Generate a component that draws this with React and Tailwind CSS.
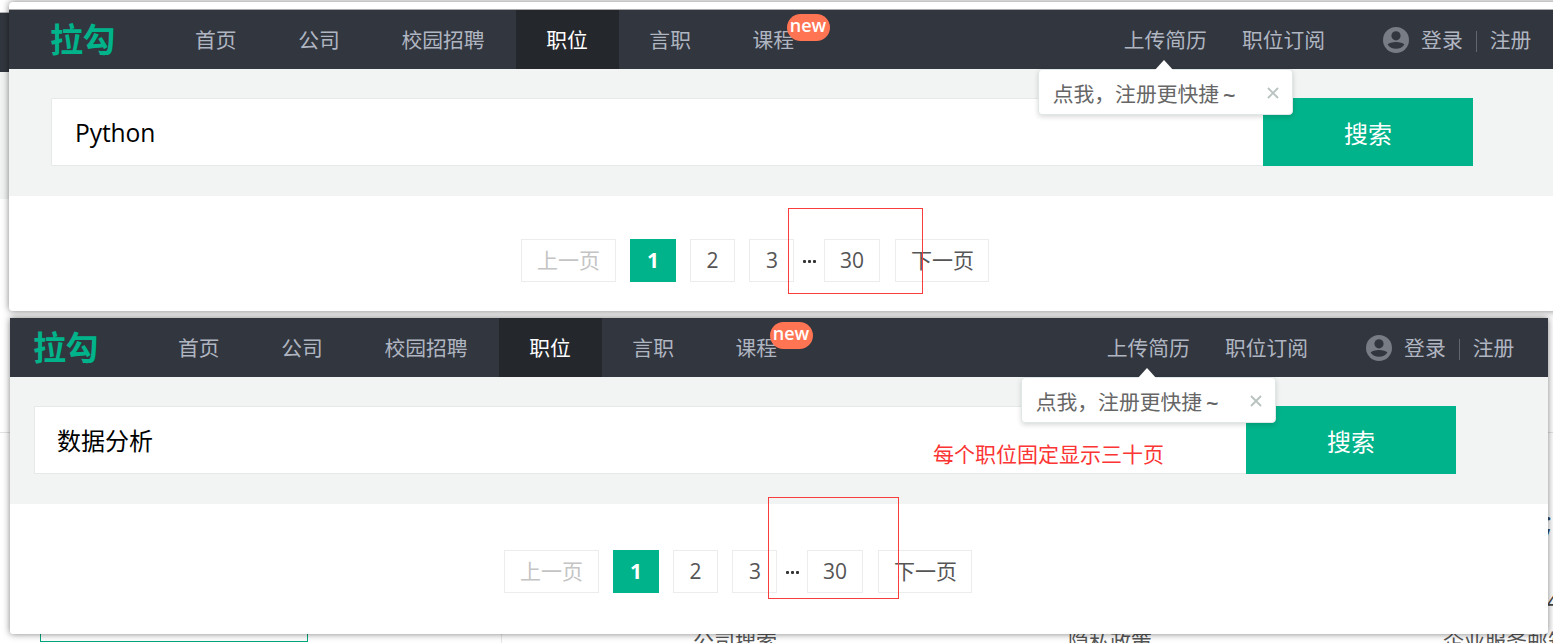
const navItems = ['首页', '公司', '校园招聘', '职位', '言职', '课程']

const Avatar = () => (
  <svg viewBox="0 0 26 26" className="mr-[12px] h-[26px] w-[26px] shrink-0">
    <circle cx="13" cy="13" r="13" fill="#787c85" />
    <circle cx="13" cy="8.8" r="4.6" fill="#32363e" />
    <path d="M4.6 17.6C6.8 14.2 19.2 14.2 21.4 17.6C18.4 23.2 7.6 23.2 4.6 17.6Z" fill="#32363e" />
  </svg>
)

const Tooltip = () => (
  <div className="absolute top-[59px] left-[-86px] z-10 flex h-[46px] w-[255px] items-center rounded-[4px] border border-[#e0e8e7] bg-white pt-[4px] pl-[14px] text-[#666] shadow-[0_2px_5px_rgba(0,0,0,0.15)]">
    <svg viewBox="0 0 20 11" className="absolute top-[-10px] left-[115px] h-[11px] w-[20px]">
      <path d="M0 11L10 0L20 11Z" fill="#fff" />
    </svg>
    <span>点我，注册更快捷</span>
    <span className="ml-[4px] font-['Open_Sans'] text-[22px] font-semibold">~</span>
    <svg viewBox="0 0 12 12" className="absolute top-[17px] left-[228px] h-[12px] w-[12px]">
      <path d="M1 1L11 11M11 1L1 11" stroke="#b9c3c1" strokeWidth="1.9" />
    </svg>
  </div>
)

const Navbar = ({ indent }) => (
  <header className={`flex h-[59px] items-center bg-[#32363e] text-[20.8px] text-[#afb5c1] ${indent}`}>
    <h1 className="-ml-px w-[115px] text-[33px] leading-[59px] font-bold tracking-[-0.5px] text-[#00b38a]">拉勾</h1>
    <nav className="flex h-full">
      {navItems.map((item) => (
        <a
          key={item}
          className={
            item === '职位'
              ? 'bg-[#24272c] pr-[31.6px] pl-[30px] leading-[60px] text-white'
              : 'relative pr-[31.6px] pl-[30px] leading-[60px]'
          }
        >
          {item}
          {item === '课程' && (
            <span className="absolute top-[4px] left-[64px] h-[27px] w-[43px] rounded-full bg-[#ff7452] text-center font-['Open_Sans'] text-[18px] leading-[23px] font-semibold text-white">
              new
            </span>
          )}
        </a>
      ))}
    </nav>
    <div className="ml-[298px] flex h-full items-center leading-[60px]">
      <div className="relative mr-[35px]">
        上传简历
        <Tooltip />
      </div>
      <span className="mr-[58px]">职位订阅</span>
      <Avatar />
      <span>登录</span>
      <i className="mr-[13px] ml-[13px] mt-[3px] h-[21px] w-px bg-[#62666d]" />
      <span>注册</span>
    </div>
  </header>
)

const SearchBar = ({ indent, keyword, note }) => (
  <section className={`flex h-[127px] items-start bg-[#f2f4f4] pt-[29px] ${indent}`}>
    <div className="relative flex h-[68px] w-[1212px] items-center border border-r-0 border-[#e6e9e9] bg-white pt-[2px] pl-[22px] text-[24px] text-black">
      {keyword}
      {note && (
        <p className="absolute top-[31px] left-[898px] text-[21px] leading-[32px] text-[#fb3434]">{note}</p>
      )}
    </div>
    <button className="h-[68px] w-[210px] bg-[#00b38a] pt-[3px] text-[24px] text-white">搜索</button>
  </section>
)

const cell = 'flex h-[43px] items-center justify-center border border-[#ececec]'

const Pager = ({ indent }) => (
  <div className={`flex text-[21px] text-[#555] ${indent}`}>
    <span className={`${cell} w-[95px] text-[#c4c4c4]`}>上一页</span>
    <span className="ml-[14px] flex h-[43px] w-[46px] items-center justify-center bg-[#00b38a] font-bold text-white">1</span>
    <span className={`${cell} ml-[14px] w-[45px]`}>2</span>
    <span className={`${cell} ml-[14px] w-[45px] pl-px`}>3</span>
    <span className="flex w-[30px] items-center justify-center gap-[2px] pt-[2px]">
      <i className="h-[3px] w-[3px] rounded-[1px] bg-[#333]" />
      <i className="h-[3px] w-[3px] rounded-[1px] bg-[#333]" />
      <i className="h-[3px] w-[3px] rounded-[1px] bg-[#333]" />
    </span>
    <span className={`${cell} w-[56px]`}>30</span>
    <span className={`${cell} ml-[15px] w-[94px] pl-px`}>下一页</span>
  </div>
)

// page that stays partly visible behind the two windows
const Backdrop = () => (
  <div className="absolute inset-0 flex flex-col bg-white text-[#555]">
    <div className="h-[13px] border-b border-[#b5b5b5]" />
    <div className="h-[59px] bg-[#32363e]" />
    <div className="h-[127px] bg-[#f2f4f4]" />
    <div className="h-[234px] border-b border-[#e3e3e3]" />
    <div className="relative flex-1 text-[21px]">
      <div className="absolute top-[99px] left-[40px] h-[110px] w-[268px] border border-[#00a67c]" />
      <div className="absolute top-[99px] left-[501px] h-[120px] w-px bg-[#e6e6e6]" />
      <span className="absolute top-[196px] left-[693px] leading-[24px]">公司搜索</span>
      <span className="absolute top-[196px] left-[1068px] leading-[24px]">隐私政策</span>
      <span className="absolute top-[196px] left-[1443px] leading-[24px] whitespace-nowrap">企业服务邮箱</span>
      <span className="absolute top-[70px] left-[1545px] text-[28px] leading-[36px] text-[#334c68]">;</span>
      <span className="absolute top-[152px] left-[1547px] text-[22px] leading-[30px] text-[#444]">4</span>
    </div>
  </div>
)

const App = () => {
  return (
    <div className="relative h-[643px] w-[1553px] overflow-hidden font-['Open_Sans','Noto_Sans_CJK_SC',sans-serif]">
      <Backdrop />
      <main className="relative pt-[2px] pl-[9px]">
        <section className="relative h-[309px] w-[1560px] rounded-[4px] bg-white shadow-[0_0_7px_rgba(0,0,0,0.5)]">
          <div className="h-[8px] border-b border-[#aaa]" />
          <Navbar indent="pl-[42px]" />
          <SearchBar
            indent="pl-[42px]"
            keyword={<span className="pl-px text-[24.6px] tracking-[-0.1px]">Python</span>}
          />
          <div className="pt-[43px]">
            <Pager indent="pl-[512px]" />
          </div>
          <div className="absolute top-[206px] left-[779px] h-[86px] w-[135px] border border-[#fb3c3c]" />
        </section>
        <section className="relative mt-[7px] ml-px h-[316px] w-[1538px] rounded-b-[3px] bg-white shadow-[0_0_7px_rgba(0,0,0,0.5)]">
          <Navbar indent="pl-[24px]" />
          <SearchBar indent="pl-[24px]" keyword="数据分析" note="每个职位固定显示三十页" />
          <div className="pt-[46px]">
            <Pager indent="pl-[494px]" />
          </div>
          <div className="absolute top-[179px] left-[758px] h-[102px] w-[131px] border border-[#fb3c3c]" />
        </section>
      </main>
    </div>
  )
}

export default App
